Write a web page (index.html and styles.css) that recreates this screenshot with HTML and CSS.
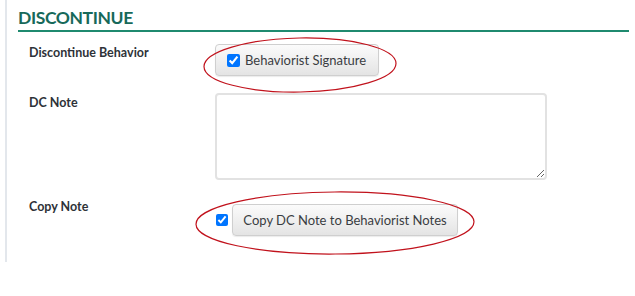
FILE: index.html
```html
<!DOCTYPE html>
<html lang="en">
<head>
    <meta charset="utf-8">
    <title>Discontinue</title>
    <link rel="stylesheet" href="styles.css">
</head>
<body>

    <div class="panel">
        <h2 class="panel-title">DISCONTINUE</h2>

        <!-- Discontinue behavior -->
        <div class="row row-behavior">
            <div class="row-label">Discontinue Behavior</div>
            <div class="row-field">
                <label class="btn btn-check">
                    <input type="checkbox" checked>
                    <span>Behaviorist Signature</span>
                </label>
            </div>
        </div>

        <!-- DC note -->
        <div class="row row-note">
            <div class="row-label">DC Note</div>
            <div class="row-field">
                <textarea class="note"></textarea>
            </div>
        </div>

        <!-- Copy note -->
        <div class="row row-copy">
            <div class="row-label">Copy Note</div>
            <div class="row-field copy-field">
                <input type="checkbox" checked>
                <button type="button" class="btn">Copy DC Note to Behaviorist Notes</button>
            </div>
        </div>
    </div>

    <!-- hand-drawn highlight marks -->
    <svg class="marks" width="635" height="296" viewBox="0 0 635 296">
        <ellipse cx="300" cy="65" rx="96" ry="27" transform="rotate(-1 300 65)"></ellipse>
        <ellipse cx="335" cy="223" rx="139" ry="31" transform="rotate(-0.5 335 223)"></ellipse>
    </svg>

</body>
</html>
```

FILE: styles.css
```css
body {
    font-family: Lato, "Open Sans", sans-serif;
    background-color: #fff;
    color: #333;
    margin: 0;
    padding: 0;
}

.panel {
    margin-left: 5px;
    width: 611px;
    height: 262px;
    border-left: 2px solid #e3e7ec;
    padding: 0 6px 0 11px;
    box-sizing: content-box;
}

.panel-title {
    margin: 0;
    padding-top: 7px;
    height: 21px;
    line-height: 21px;
    font-size: 17.5px;
    font-weight: bold;
    letter-spacing: -0.4px;
    color: #17695a;
    border-bottom: 2px solid #1f8a6f;
    padding-bottom: 2px;
}

.row {
    display: flex;
    padding-left: 11px;
}

.row-label {
    width: 186px;
    flex: none;
    font-size: 12.5px;
    font-weight: bold;
    color: #2e3238;
}

.row-behavior {
    margin-top: 12px;
}

.row-behavior .row-label {
    padding-top: 1px;
}

.row-note {
    margin-top: 17px;
}

.row-note .row-label {
    padding-top: 2px;
}

.row-copy {
    margin-top: 20px;
}

.row-copy .row-label {
    margin-top: -1px;
}

.row-copy .row-field {
    padding-top: 4px;
}

.btn {
    display: inline-flex;
    align-items: center;
    box-sizing: border-box;
    height: 32px;
    padding: 0 12px;
    white-space: nowrap;
    font-family: Lato, "Open Sans", sans-serif;
    font-size: 13px;
    color: #3a3d42;
    background: linear-gradient(#fbfbfb, #e4e4e4);
    border: 1px solid #cfcfcf;
    border-radius: 4px;
    box-shadow: 0 1px 1px rgba(0, 0, 0, 0.08);
    cursor: pointer;
}

.btn-check {
    width: 164px;
    padding-left: 11px;
}

.btn-check input {
    margin: 0 5px 0 0;
    width: 13px;
    height: 13px;
}

.note {
    display: block;
    box-sizing: border-box;
    width: 332px;
    height: 87px;
    border: 2px solid #e2e2e2;
    border-radius: 4px;
    resize: both;
    margin: 0;
}

.copy-field {
    display: flex;
    align-items: center;
}

.copy-field input {
    margin: 0 4px 0 1px;
    width: 12px;
    height: 12px;
}

.copy-field .btn {
    width: 226px;
    justify-content: center;
}

.marks {
    position: absolute;
    left: 0;
    top: 0;
    pointer-events: none;
}

.marks ellipse {
    fill: none;
    stroke: #c1121c;
    stroke-width: 1.2;
}
```
